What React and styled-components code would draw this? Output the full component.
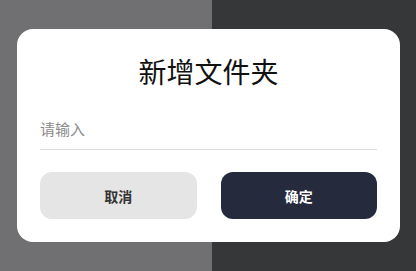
import React from "react";
import styled, { createGlobalStyle } from "styled-components";

const Global = createGlobalStyle`
  html, body {
    margin: 0;
    padding: 0;
  }
  body {
    font-family: "Noto Sans CJK SC", "Noto Sans", sans-serif;
  }
`;

const Backdrop = styled.div`
  width: 416px;
  height: 271px;
  box-sizing: border-box;
  padding: 29px 16px 0 17px;
  background: linear-gradient(to right, #707072 0, #707072 212px, #363739 212px, #363739 100%);
  overflow: hidden;
`;

const Card = styled.div`
  width: 383px;
  height: 213px;
  box-sizing: border-box;
  padding: 28px 23px 0;
  background: #ffffff;
  border-radius: 16px;
  display: flex;
  flex-direction: column;
`;

const Title = styled.h2`
  margin: 0;
  font-size: 28px;
  line-height: 28px;
  font-weight: 400;
  color: #111;
  text-align: center;
`;

const Input = styled.input`
  margin-top: 34px;
  height: 20px;
  padding: 0 0 10px;
  border: none;
  border-bottom: 1px solid #dcdcdc;
  outline: none;
  font-family: inherit;
  font-size: 15px;
  line-height: 20px;
  color: #333;
  background: transparent;

  &::placeholder {
    color: #8c8c8c;
  }
`;

const Actions = styled.div`
  margin-top: 22px;
  display: grid;
  grid-template-columns: 1fr 1fr;
  gap: 24px;
`;

const Button = styled.button`
  height: 47px;
  border: none;
  border-radius: 12px;
  font-family: inherit;
  font-size: 14px;
  font-weight: 700;
  background: ${(p) => (p.$primary ? "#262a3d" : "#e5e5e5")};
  color: ${(p) => (p.$primary ? "#ffffff" : "#333333")};
  cursor: pointer;
`;

export default function App() {
  return (
    <>
      <Global />
      <Backdrop>
        <Card>
          <Title>新增文件夹</Title>
          <Input placeholder="请输入" />
          <Actions>
            <Button>取消</Button>
            <Button $primary>确定</Button>
          </Actions>
        </Card>
      </Backdrop>
    </>
  );
}
